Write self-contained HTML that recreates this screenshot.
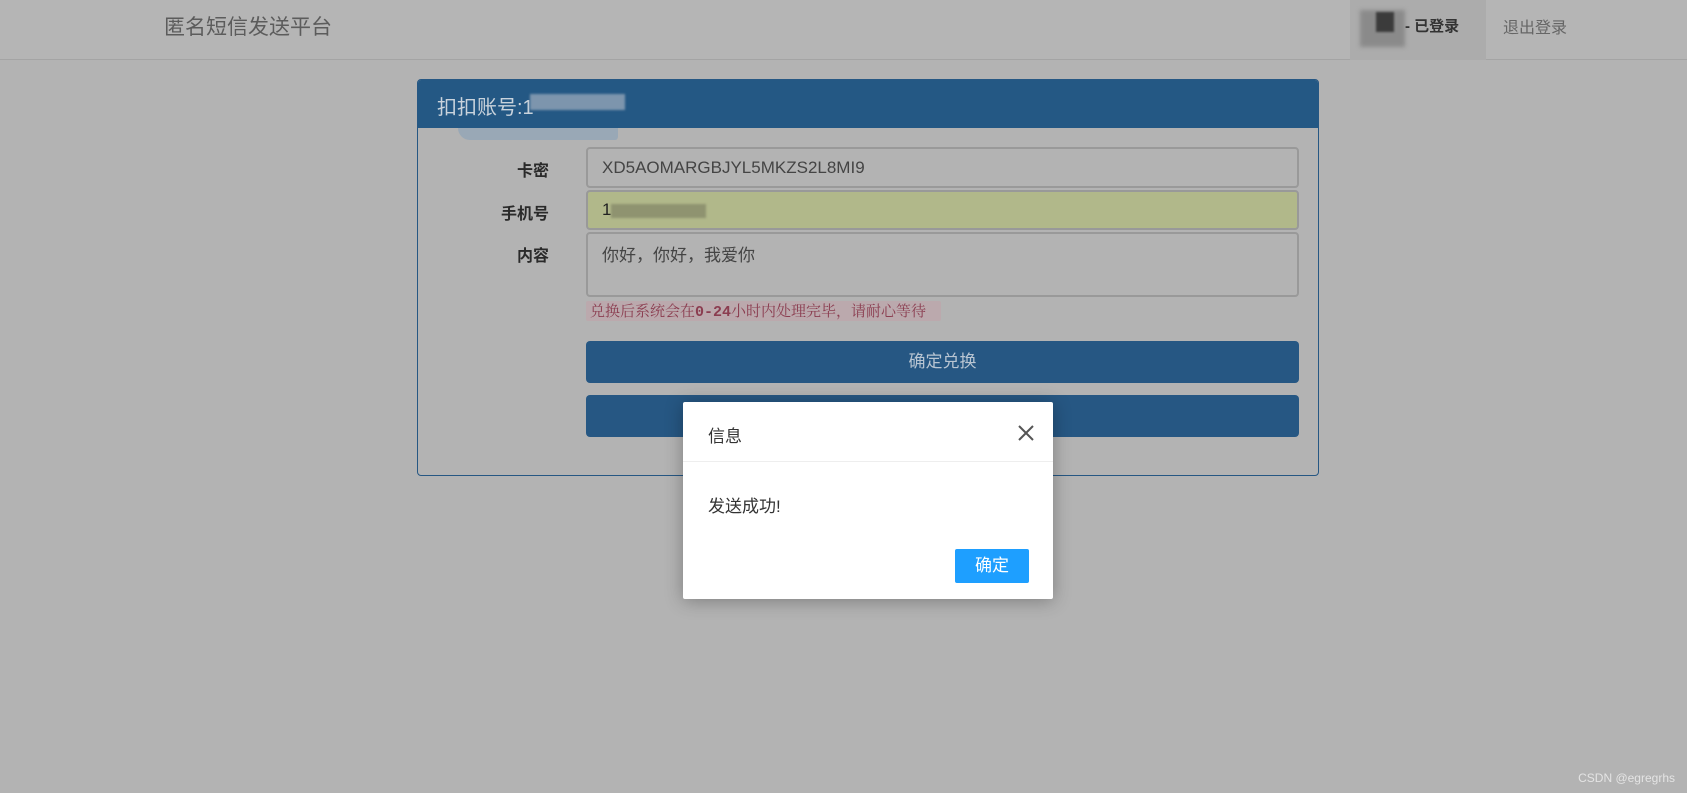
<!DOCTYPE html>
<html><head><meta charset="utf-8">
<style>
*{margin:0;padding:0;box-sizing:border-box}
body{width:1687px;height:793px;background:#b3b3b3;font-family:"Liberation Sans","Noto Sans CJK SC",sans-serif;position:relative;overflow:hidden}
.nav{position:absolute;left:0;top:0;width:1687px;height:60px;background:#b5b5b5;border-bottom:1px solid #a4a4a4}
.title{position:absolute;left:164px;top:11px;font-size:21px;color:#5c5c5c}
.logged{position:absolute;left:1350px;top:0;width:136px;height:60px;background:#acacac}
.blur1{position:absolute;left:1360px;top:10px;width:45px;height:37px;background:#8a8a8a;filter:blur(2px)}
.blur1b{position:absolute;left:1376px;top:12px;width:18px;height:20px;background:#3b3b3b;filter:blur(1px)}
.lt{position:absolute;left:1405px;top:15px;font-size:15px;font-weight:bold;color:#333}
.logout{position:absolute;left:1503px;top:14px;font-size:16px;color:#666}
.panel{position:absolute;left:417px;top:79px;width:902px;height:397px;border:1px solid #265783;border-radius:4px;background:#b3b3b3}
.ph{position:absolute;left:0;top:0;width:900px;height:48px;background:#245884;border-radius:3px 3px 0 0}
.pht{position:absolute;left:19px;top:11px;font-size:20px;color:#c9d3dc}
.phb{position:absolute;left:112px;top:14px;width:95px;height:16px;background:#7d95ad;filter:blur(1px)}
.smear{position:absolute;left:40px;top:48px;width:160px;height:12px;background:#99a8b6;border-radius:0 0 8px 30px}
.lbl{position:absolute;right:calc(1687px - 549px);font-size:16px;font-weight:bold;color:#2a2a2a}
.inp{position:absolute;left:586px;width:713px;border:2px solid #999;border-radius:4px;background:#b3b3b3;font-size:17px;color:#444;padding-left:14px}
.hint{position:absolute;left:586px;top:301px;width:355px;height:20px;background:#bba9ad;color:#8b3d50;font-family:"Noto Serif CJK SC","Liberation Serif",serif;font-size:15px;line-height:20px;padding-left:4px;border-radius:2px}
.btn{position:absolute;left:586px;width:713px;height:42px;background:#265783;border-radius:4px;color:#b8c5d2;font-size:17px;text-align:center;line-height:42px}
.modal{position:absolute;left:683px;top:402px;width:370px;height:197px;background:#fff;border-radius:2px;box-shadow:0 2px 18px rgba(0,0,0,.3)}
.mh{height:60px;border-bottom:1px solid #eee;font-size:17px;color:#333;padding:20px 0 0 25px}
.close{position:absolute;left:334px;top:22px}
.mb{position:absolute;left:25px;top:90px;font-size:17px;color:#333}
.ok{position:absolute;left:272px;top:147px;width:74px;height:34px;background:#1e9fff;border-radius:2px;color:#fff;font-size:17px;text-align:center;line-height:34px}
.wm{position:absolute;right:12px;bottom:8px;font-size:12px;color:#e4e4e4}
</style></head><body>
<div class="nav">
  <div class="title">匿名短信发送平台</div>
  <div class="logged"></div>
  <div class="blur1"></div><div class="blur1b"></div>
  <div class="lt">- 已登录</div>
  <div class="logout">退出登录</div>
</div>
<div class="panel">
  <div class="ph"><div class="pht">扣扣账号:1</div><div class="phb"></div></div>
  <div class="smear"></div>
</div>
<div class="lbl" style="top:157px">卡密</div>
<div class="lbl" style="top:200px">手机号</div>
<div class="lbl" style="top:242px">内容</div>
<div class="inp" style="top:147px;height:41px;line-height:37px">XD5AOMARGBJYL5MKZS2L8MI9</div>
<div class="inp" style="top:190px;height:40px;line-height:36px;background:#b1b88a;color:#222">1<span style="display:inline-block;width:95px;height:14px;background:#8f9370;vertical-align:middle;filter:blur(1px)"></span></div>
<div class="inp" style="top:232px;height:65px;padding-top:7px">你好，你好，我爱你</div>
<div class="hint">兑换后系统会在<b style="font-family:'Liberation Mono',monospace">0-24</b>小时内处理完毕，请耐心等待</div>
<div class="btn" style="top:341px">确定兑换</div>
<div class="btn" style="top:395px"></div>
<div class="modal">
  <div class="mh">信息</div>
  <svg class="close" width="18" height="18" viewBox="0 0 18 18"><path d="M2 2L16 16M16 2L2 16" stroke="#555" stroke-width="2"/></svg>
  <div class="mb">发送成功!</div>
  <div class="ok">确定</div>
</div>
<div class="wm">CSDN @egregrhs</div>
</body></html>
